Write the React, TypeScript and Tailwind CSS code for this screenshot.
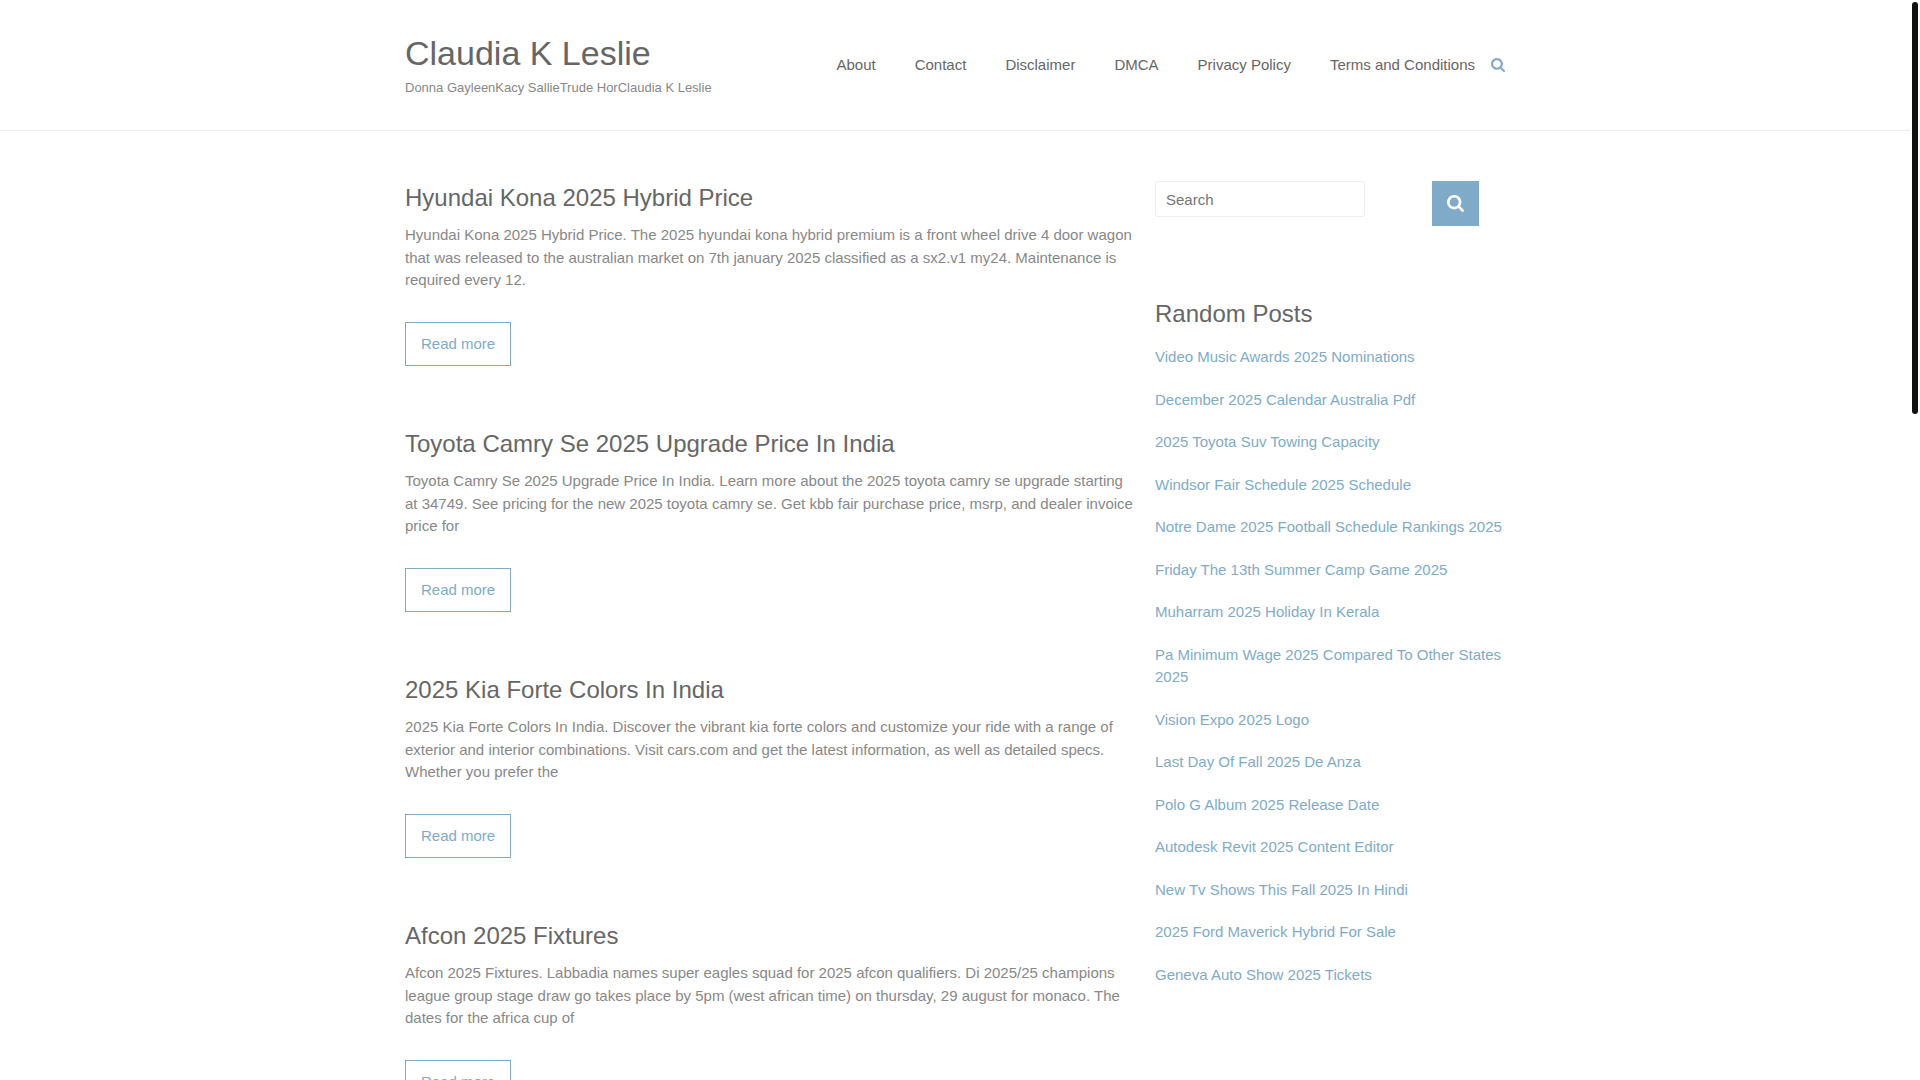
const navLinks = ['About', 'Contact', 'Disclaimer', 'DMCA', 'Privacy Policy', 'Terms and Conditions']

const posts = [
  {
    title: 'Hyundai Kona 2025 Hybrid Price',
    excerpt:
      'Hyundai Kona 2025 Hybrid Price. The 2025 hyundai kona hybrid premium is a front wheel drive 4 door wagon that was released to the australian market on 7th january 2025 classified as a sx2.v1 my24. Maintenance is required every 12.',
  },
  {
    title: 'Toyota Camry Se 2025 Upgrade Price In India',
    excerpt:
      'Toyota Camry Se 2025 Upgrade Price In India. Learn more about the 2025 toyota camry se upgrade starting at 34749. See pricing for the new 2025 toyota camry se. Get kbb fair purchase price, msrp, and dealer invoice price for',
  },
  {
    title: '2025 Kia Forte Colors In India',
    excerpt:
      '2025 Kia Forte Colors In India. Discover the vibrant kia forte colors and customize your ride with a range of exterior and interior combinations. Visit cars.com and get the latest information, as well as detailed specs. Whether you prefer the',
  },
  {
    title: 'Afcon 2025 Fixtures',
    excerpt:
      'Afcon 2025 Fixtures. Labbadia names super eagles squad for 2025 afcon qualifiers. Di 2025/25 champions league group stage draw go takes place by 5pm (west african time) on thursday, 29 august for monaco. The dates for the africa cup of',
  },
]

const randomPosts = [
  'Video Music Awards 2025 Nominations',
  'December 2025 Calendar Australia Pdf',
  '2025 Toyota Suv Towing Capacity',
  'Windsor Fair Schedule 2025 Schedule',
  'Notre Dame 2025 Football Schedule Rankings 2025',
  'Friday The 13th Summer Camp Game 2025',
  'Muharram 2025 Holiday In Kerala',
  'Pa Minimum Wage 2025 Compared To Other States 2025',
  'Vision Expo 2025 Logo',
  'Last Day Of Fall 2025 De Anza',
  'Polo G Album 2025 Release Date',
  'Autodesk Revit 2025 Content Editor',
  'New Tv Shows This Fall 2025 In Hindi',
  '2025 Ford Maverick Hybrid For Sale',
  'Geneva Auto Show 2025 Tickets',
]

function SearchIcon({ size }: { size: number }) {
  return (
    <svg width={size} height={size} viewBox="0 128 1664 1664" fill="currentColor" aria-hidden="true">
      <path d="M1152 832q0-185-131.500-316.500T704 384 387.500 515.500 256 832t131.500 316.500T704 1280t316.500-131.500T1152 832zm512 832q0 52-38 90t-90 38q-54 0-90-38l-343-342q-179 124-399 124-143 0-273.500-55.500t-225-150-150-225T0 832t55.500-273.500 150-225 225-150T704 128t273.500 55.500 225 150 150 225T1408 832q0 220-124 399l343 343q37 37 37 90z" />
    </svg>
  )
}

function Header() {
  return (
    <header className="border-b border-[#eeeeee]">
      <div className="mx-auto flex h-[130px] max-w-[1100px] items-start justify-between">
        <div className="pt-7">
          <h1 className="text-[34px] leading-[50px] text-[#666666]">
            <a href="#">Claudia K Leslie</a>
          </h1>
          <p className="text-[13px] leading-5">Donna GayleenKacy SallieTrude HorClaudia K Leslie</p>
        </div>
        <div className="flex items-center gap-4 pt-[54px]">
          <nav>
            <ul className="flex gap-[39px]">
              {navLinks.map((link) => (
                <li key={link}>
                  <a href="#" className="text-[#666666]">
                    {link}
                  </a>
                </li>
              ))}
            </ul>
          </nav>
          <button type="button" aria-label="Toggle search" className="text-[#80abc8]">
            <SearchIcon size={14} />
          </button>
        </div>
      </div>
    </header>
  )
}

function Sidebar() {
  return (
    <aside className="w-[350px] shrink-0">
      <form className="mb-[70px] flex w-[324px] items-start justify-between">
        <input
          type="text"
          placeholder="Search"
          aria-label="Search"
          className="h-9 w-[210px] rounded-[3px] border border-[#eeeeee] px-[10px] placeholder:text-[#757575]"
        />
        <button
          type="submit"
          aria-label="Submit search"
          className="flex h-[45px] w-[47px] items-center justify-center bg-[#80abc8] text-white"
        >
          <SearchIcon size={17} />
        </button>
      </form>
      <h3 className="mb-[14px] text-2xl leading-9 text-[#666666]">Random Posts</h3>
      <ul className="flex flex-col gap-5">
        {randomPosts.map((post) => (
          <li key={post}>
            <a href="#" className="text-[#80abc8]">
              {post}
            </a>
          </li>
        ))}
      </ul>
    </aside>
  )
}

export default function App() {
  return (
    <div className="relative h-screen overflow-hidden bg-white pr-[10px] font-['Liberation_Sans',Arial,sans-serif] text-[15px] leading-normal text-[#888888]">
      <Header />
      <div className="mx-auto flex max-w-[1100px] gap-[18px] pt-[50px]">
        <main className="flex min-w-0 flex-1 flex-col gap-[61px]">
          {posts.map((post) => (
            <article key={post.title}>
              <h2 className="mb-[9px] text-2xl leading-[34px] text-[#666666]">
                <a href="#">{post.title}</a>
              </h2>
              <p className="mb-[30px]">{post.excerpt}</p>
              <a href="#" className="inline-block border border-[#80abc8] px-[15px] py-[10px] align-top text-[#80abc8]">
                Read more
              </a>
            </article>
          ))}
        </main>
        <Sidebar />
      </div>
      {/* Scroll thumb */}
      <div className="absolute top-[2px] right-[2px] h-[412px] w-[6px] rounded-full bg-[#111111]" />
    </div>
  )
}
